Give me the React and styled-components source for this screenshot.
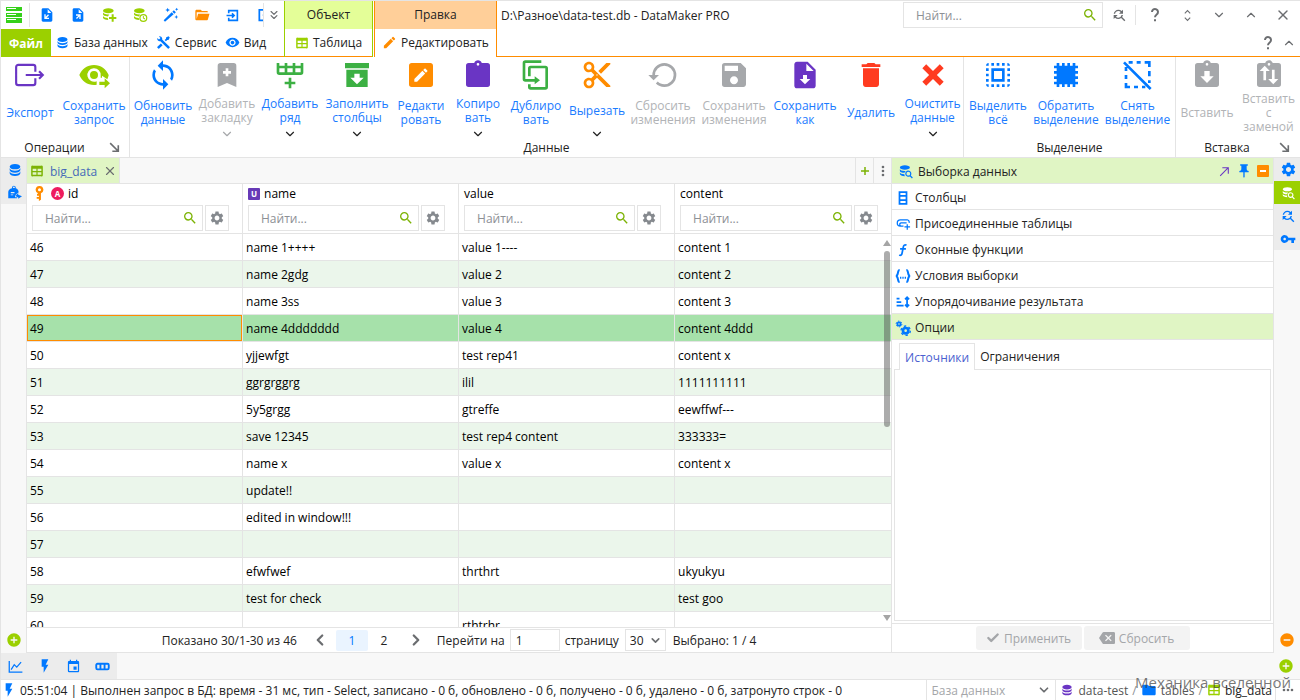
import { useState } from "react";
import styled, { createGlobalStyle } from "styled-components";
import {
  MdAddCircle,
  MdBackspace,
  MdContentCut,
  MdDelete,
  MdEdit,
  MdEvent,
  MdFindReplace,
  MdFlashOn,
  MdFolder,
  MdPushPin,
  MdRemoveCircle,
  MdSave,
  MdSearch,
  MdSelectAll,
  MdSettings,
  MdSync,
  MdVisibility,
  MdVpnKey,
} from "react-icons/md";
import { Check, ChevronDown, ChevronLeft, ChevronRight, ChevronUp, ChevronsDown, X } from "lucide-react";

const blue = "#0078ff";
const lime = "#9bd000";
const leaf = "#7cb305";
const green = "#3cb043";
const orange = "#ff8c00";
const purple = "#6a35c4";
const gray = "#a6a8ab";
const dark = "#6b6d70";
const line = "#e4e4e4";

const shapes = {
  database:
    "M12,3C7.58,3 4,4.79 4,7C4,9.21 7.58,11 12,11C16.42,11 20,9.21 20,7C20,4.79 16.42,3 12,3M4,9V12C4,14.21 7.58,16 12,16C16.42,16 20,14.21 20,12V9C20,11.21 16.42,13 12,13C7.58,13 4,11.21 4,9M4,14V17C4,19.21 7.58,21 12,21C16.42,21 20,19.21 20,17V14C20,16.21 16.42,18 12,18C7.58,18 4,16.21 4,14Z",
  databaseCut:
    "M11,2C6.6,2 3,3.6 3,5.6C3,7.6 6.6,9.2 11,9.2C15.4,9.2 19,7.6 19,5.6C19,3.6 15.4,2 11,2M3,8V11C3,12.7 6,14 10.4,14.1A7,7 0 0 1 12.6,11.1C7.600,11.500 3,10.200 3,8M3,13.200V16C3,17.800 6.200,19.200 11,19.400A7,7 0 0 1 10.200,16.400C6,16.300 3,15 3,13.200Z",
  plus: "M16,11H19V15H23V18H19V22H16V18H12V15H16Z",
  clock: "M17,10.500A6,6 0 1 0 17,22.500A6,6 0 1 0 17,10.500M17,12.300A4.200,4.200 0 1 1 17,20.700A4.200,4.200 0 1 1 17,12.300M16.300,13.500H17.700V16.200L19.700,17.400L19,18.600L16.300,17Z",
  lens: "M16.500,10.500A5,5 0 1 0 19.100,19.800L22.300,23L23.700,21.600L20.500,18.400A5,5 0 0 0 16.500,10.500M16.500,12.500A3,3 0 1 1 16.500,18.500A3,3 0 1 1 16.500,12.500Z",
  wand: "M3,22L1,20L13,8L16,11ZM14,7L16.300,4.700L19.300,7.700L17,10ZM7,1L8,3.500L10.500,4.500L8,5.500L7,8L6,5.500L3.500,4.500L6,3.500ZM20.500,1L21.300,2.700L23,3.500L21.300,4.300L20.500,6L19.700,4.300L18,3.500L19.700,2.700ZM20,12L20.900,14.100L23,15L20.900,15.900L20,18L19.100,15.900L17,15L19.100,14.100Z",
  folderOpen:
    "M19,20H4C2.89,20 2,19.1 2,18V6C2,4.89 2.89,4 4,4H10L12,6H19A2,2 0 0,1 21,8H21L4,8V18L6.14,10H23.21L20.93,18.5C20.7,19.37 19.92,20 19,20Z",
  tools:
    "M21.71 20.29L20.29 21.71A1 1 0 0 1 18.88 21.71L7 9.85A3.81 3.81 0 0 1 6 10A4 4 0 0 1 2.22 4.7L4.76 7.24L5.29 6.71L6.71 5.29L7.24 4.76L4.7 2.22A4 4 0 0 1 10 6A3.81 3.81 0 0 1 9.85 7L21.71 18.88A1 1 0 0 1 21.71 20.29M2.29 18.88A1 1 0 0 0 2.29 20.29L3.71 21.71A1 1 0 0 0 5.12 21.71L10.59 16.25L7.76 13.42M20 2L16 4V6L13.83 8.17L15.83 10.17L18 8H20L22 4Z",
  table:
    "M5,3H19A2,2 0 0,1 22,5V19A2,2 0 0,1 19,21H5A2,2 0 0,1 2,19V5A2,2 0 0,1 5,3M4.500,8V12H11V8H4.500M13,8V12H19.500V8H13M4.500,14V18.500H11V14H4.500M13,14V18.500H19.500V14H13Z",
  fileIn:
    "M14,2H6C4.89,2 4,2.89 4,4V20C4,21.11 4.89,22 6,22H18C19.11,22 20,21.11 20,20V8L14,2M13,9V3.5L18.5,9H13M8,18V11H10V14.600L13.600,11L15,12.400L11.400,16H15V18Z",
  fileOut:
    "M14,2H6C4.89,2 4,2.89 4,4V20C4,21.11 4.89,22 6,22H18C19.11,22 20,21.11 20,20V8L14,2M13,9V3.5L18.5,9H13M16,11V18H14V14.400L10.400,18L9,16.600L12.600,13H9V11Z",
  fileDown:
    "M14,2H6C4.89,2 4,2.89 4,4V20C4,21.11 4.89,22 6,22H18C19.11,22 20,21.11 20,20V8L14,2M12,19L8,15H10.5V12H13.5V15H16L12,19M13,9V3.5L18.5,9H13Z",
  bookmarkPlus:
    "M17,3A2,2 0 0,1 19,5V21L12,18L5,21V5C5,3.89 5.9,3 7,3H17M11,7V9H9V11H11V13H13V11H15V9H13V7H11Z",
  rowPlus:
    "M22,10A2,2 0 0,1 20,12H4A2,2 0 0,1 2,10V3H4V5H8V3H10V5H14V3H16V5H20V3H22V10M4,10H8V7H4V10M10,10H14V7H10V10M20,10V7H16V10H20M11,14H13V17H16V19H13V22H11V19H8V17H11V14Z",
  archiveDown: "M3,3H21V7H3V3M4,8H20V21H4V8M14,14V11H10V14H7L12,19L17,14H14Z",
  pencilBox:
    "M19,3H5C3.89,3 3,3.89 3,5V19A2,2 0 0,0 5,21H19A2,2 0 0,0 21,19V5C21,3.89 20.1,3 19,3M16.7,9.35L15.7,10.35L13.65,8.3L14.65,7.3C14.86,7.08 15.21,7.08 15.42,7.3L16.7,8.58C16.92,8.79 16.92,9.14 16.7,9.35M7,14.94L13.06,8.88L15.12,10.94L9.06,17H7V14.94Z",
  clipboard:
    "M19,3H14.82C14.4,1.84 13.3,1 12,1C10.7,1 9.6,1.84 9.18,3H5A2,2 0 0,0 3,5V19A2,2 0 0,0 5,21H19A2,2 0 0,0 21,19V5A2,2 0 0,0 19,3M12,3A1,1 0 0,1 13,4A1,1 0 0,1 12,5A1,1 0 0,1 11,4A1,1 0 0,1 12,3",
  clipboardDown:
    "M19,3H14.82C14.4,1.84 13.3,1 12,1C10.7,1 9.6,1.84 9.18,3H5A2,2 0 0,0 3,5V19A2,2 0 0,0 5,21H19A2,2 0 0,0 21,19V5A2,2 0 0,0 19,3M12,3A1,1 0 0,1 13,4A1,1 0 0,1 12,5A1,1 0 0,1 11,4A1,1 0 0,1 12,3M12,18L7,13H10V9H14V13H17L12,18Z",
  clipboardSwap:
    "M19,3H14.82C14.4,1.84 13.3,1 12,1C10.7,1 9.6,1.84 9.18,3H5A2,2 0 0,0 3,5V19A2,2 0 0,0 5,21H19A2,2 0 0,0 21,19V5A2,2 0 0,0 19,3M12,3A1,1 0 0,1 13,4A1,1 0 0,1 12,5A1,1 0 0,1 11,4A1,1 0 0,1 12,3M8.800,5L12.600,9H9.800V16H7.800V9H5ZM15.200,19L11.400,15H14.200V8H16.200V15H19Z",
  duplicate:
    "M11,17H4A2,2 0 0,1 2,15V3A2,2 0 0,1 4,1H16V3H4V15H11V13L15,16L11,19V17M19,21V7H8V13H6V7A2,2 0 0,1 8,5H19A2,2 0 0,1 21,7V21A2,2 0 0,1 19,23H8A2,2 0 0,1 6,21V19H8V21H19Z",
  restore:
    "M13,3A9,9 0 0,0 4,12H1L4.89,15.89L4.96,16.03L9,12H6A7,7 0 0,1 13,5A7,7 0 0,1 20,12A7,7 0 0,1 13,19C11.07,19 9.32,18.21 8.06,16.94L6.64,18.36C8.27,20 10.5,21 13,21A9,9 0 0,0 22,12A9,9 0 0,0 13,3Z",
  closeThick:
    "M20 6.91L17.09 4L12 9.09L6.91 4L4 6.91L9.09 12L4 17.09L6.91 20L12 14.91L17.09 20L20 17.09L14.91 12L20 6.91Z",
  invert:
    "M5,3H7V5H9V3H11V5H13V3H15V5H17V3H19V5H21V7H19V9H21V11H19V13H21V15H19V17H21V19H19V21H17V19H15V21H13V19H11V21H9V19H7V21H5V19H3V17H5V15H3V13H5V11H3V9H5V7H3V5H5V3Z",
  eyeArrow:
    "M12,4.500C7,4.500 2.730,7.610 1,12C2.730,16.390 7,19.500 12,19.500C12.700,19.500 13.400,19.400 14,19.300V16.600A5,5 0 1 1 17,12.500V14H18V12.500L22,15.200C22.500,13.800 23,12.800 23,12C21.270,7.610 17,4.500 12,4.500M12,9A3,3 0 1 0 12,15A3,3 0 1 0 12,9M16,17H20V14.500L24,18.200L20,22V19.500H16Z",
  dotsVertical:
    "M12,16A2,2 0 1 1 12,20A2,2 0 1 1 12,16M12,10A2,2 0 1 1 12,14A2,2 0 1 1 12,10M12,4A2,2 0 1 1 12,8A2,2 0 1 1 12,4Z",
  dots: "M16,12A2,2 0 1 1 20,12A2,2 0 1 1 16,12M10,12A2,2 0 1 1 14,12A2,2 0 1 1 10,12M4,12A2,2 0 1 1 8,12A2,2 0 1 1 4,12Z",
  bag: "M8,5V4A3,3 0 0 1 14,4V5C17,6 18.500,8 18.500,11V12L14,15L16,21H2V11C2,8 4,6 8,5M9.500,4.600H12.500V4A1.500,1.500 0 0 0 9.500,4ZM6,11V13H12V11ZM6,15V16.500H10V15ZM13,17L18,13V15.500L24,18L18,22V19.500H13Z",
  key: "M12,0A6,6 0 0 1 14.300,11.600V22L11,24L11,20.500H7.500V17.500H11V15.500H8V12.500H9.700V11.600A6,6 0 0 1 12,0M12,3.600A2.400,2.400 0 1 0 12,8.400A2.400,2.400 0 1 0 12,3.600Z",
};

const strokes = {
  export: "M20,9V4.500A2,2 0 0 0 18,2.500H4A2,2 0 0 0 2,4.500V19.500A2,2 0 0 0 4,21.500H18A2,2 0 0 0 20,19.500V15M11,12H27M23.500,8.500L27,12L23.500,15.500",
  enter: "M5,8V3H21V21H5V16M1,12H15M11,8L15,12L11,16",
  leave: "M17,3H4V21H17M10,12H22",
  unselect: "M8,2.500H5M11,2.500H14M17,2.500H20.500V6M20.500,9V13M20.500,16V18M3,6V9M3,12V15M3,18V21H6M9,21H12M15,21H17.500M1.500,2.500L21.500,22.500",
  help: "M7.500,7.500A4.500,4.500 0 1 1 14.500,11.200C12.800,12.500 12,13.200 12,15.500M12,18.500V21.500",
  unfold: "M7,8L12,3L17,8M7,16L12,21L17,16",
  corner: "M4,4L19,19M19,8V19H8",
  northEast: "M4,20L19,5M8,5H19V16",
  columns: "M6,2H18V22H6ZM6,8.500H18M6,15.500H18",
  link: "M8,16H7A5,5 0 0 1 7,6H18A4,4 0 0 1 21,11M12,16H9A2.500,2.500 0 0 1 8,11H17M18,13V22M13.500,17.500H22.500",
  func: "M18,4C15,2 13,4 12.500,7L10.500,17C10,20.500 8,22 5.500,20.500M7,10H17",
  braces: "M7,3C3,3 6,11 1.500,12C6,13 3,21 7,21M17,3C21,3 18,11 22.500,12C18,13 21,21 17,21M7.500,14.500H9.500M11,14.500H13M14.500,14.500H16.500",
  sort: "M1,6H6M1,12H9M1,18H13M19,4V20M15.500,7.500L19,4L22.500,7.500M15.500,16.500L19,20L22.500,16.500",
  chart: "M2,3V21H23M5,17L10,9L14,13L21,5",
  cells: "M4,7.500H20A2,2 0 0 1 22,9.500V14.500A2,2 0 0 1 20,16.500H4A2,2 0 0 1 2,14.500V9.500A2,2 0 0 1 4,7.500M8.700,8V16M15.300,8V16",
  add: "M12,4V20M4,12H20",
};

const Icon = ({ name, size = 16, color = blue }) => (
  <svg width={size} height={size} viewBox="0 0 24 24" fill={color} aria-hidden="true">
    {name.split(" ").map((part) => (
      <path key={part} fillRule="evenodd" d={shapes[part]} />
    ))}
  </svg>
);

const StrokeIcon = ({ name, size = 16, color = blue, weight = 2, wide }) => (
  <svg
    width={wide || size}
    height={size}
    viewBox={wide ? "0 0 30 24" : "0 0 24 24"}
    fill="none"
    stroke={color}
    strokeWidth={weight}
    aria-hidden="true"
  >
    <path d={strokes[name]} />
  </svg>
);

const Logo = () => (
  <svg width="16" height="16" viewBox="0 0 16 16" aria-hidden="true">
    {[0, 6, 11].map((y) => (
      <g key={y}>
        <rect y={y} width="16" height={y ? 5 : 4} fill="#35d01a" />
        <rect x="1" y={y + 1} width="9" height="1" fill="#fff" />
        <rect x="0" y={y - 1} width="16" height="1" fill="#fff" />
      </g>
    ))}
  </svg>
);

const quickActions = [
  { label: "Импорт файла", icon: <Icon name="fileIn" /> },
  { label: "Экспорт файла", icon: <Icon name="fileOut" /> },
  { label: "Новая база", icon: <Icon name="databaseCut plus" color={lime} /> },
  { label: "История базы", icon: <Icon name="databaseCut clock" color={lime} /> },
  { label: "Мастер", icon: <Icon name="wand" /> },
  { label: "Открыть", icon: <Icon name="folderOpen" color={orange} /> },
  { label: "Войти", icon: <StrokeIcon name="enter" size={13} weight={3} /> },
  { label: "Выйти", icon: <StrokeIcon name="leave" size={14} weight={3} /> },
];

const ribbon = [
  {
    title: "Операции",
    launcher: true,
    items: [
      { text: ["Экспорт"], width: 58, icon: <StrokeIcon name="export" size={26} wide={32} color={purple} /> },
      { text: ["Сохранить", "запрос"], width: 70, icon: <Icon name="eyeArrow" size={32} color={lime} /> },
    ],
  },
  {
    title: "Данные",
    items: [
      { text: ["Обновить", "данные"], width: 66, icon: <MdSync size={32} color={blue} /> },
      { text: ["Добавить", "закладку"], width: 62, off: true, menu: true, icon: <Icon name="bookmarkPlus" size={32} color={gray} /> },
      { text: ["Добавить", "ряд"], width: 64, menu: true, icon: <Icon name="rowPlus" size={32} color={green} /> },
      { text: ["Заполнить", "столбцы"], width: 70, menu: true, icon: <Icon name="archiveDown" size={32} color={green} /> },
      { text: ["Редакти", "ровать"], width: 58, icon: <Icon name="pencilBox" size={32} color={orange} /> },
      { text: ["Копиро", "вать"], width: 56, menu: true, icon: <Icon name="clipboard" size={32} color={purple} /> },
      { text: ["Дублиро", "вать"], width: 60, icon: <Icon name="duplicate" size={32} color={green} /> },
      { text: ["Вырезать"], width: 62, menu: true, icon: <MdContentCut size={32} color={orange} /> },
      { text: ["Сбросить", "изменения"], width: 70, off: true, icon: <Icon name="restore" size={32} color={gray} /> },
      { text: ["Сохранить", "изменения"], width: 72, off: true, icon: <MdSave size={32} color={gray} /> },
      { text: ["Сохранить", "как"], width: 70, icon: <Icon name="fileDown" size={32} color={purple} /> },
      { text: ["Удалить"], width: 62, icon: <MdDelete size={32} color="#ff3b20" /> },
      { text: ["Очистить", "данные"], width: 61, menu: true, icon: <Icon name="closeThick" size={32} color="#ff3b20" /> },
    ],
  },
  {
    title: "Выделение",
    items: [
      { text: ["Выделить", "всё"], width: 68, icon: <MdSelectAll size={32} color={blue} /> },
      { text: ["Обратить", "выделение"], width: 68, icon: <Icon name="invert" size={32} /> },
      { text: ["Снять", "выделение"], width: 75, icon: <StrokeIcon name="unselect" size={32} /> },
    ],
  },
  {
    title: "Вставка",
    launcher: true,
    items: [
      { text: ["Вставить"], width: 62, off: true, icon: <Icon name="clipboardDown" size={32} color={gray} /> },
      { text: ["Вставить", "с", "заменой"], width: 61, off: true, icon: <Icon name="clipboardSwap" size={32} color={gray} /> },
    ],
  },
];

const columns = [
  { name: "id", isKey: true },
  { name: "name", isUnique: true },
  { name: "value" },
  { name: "content" },
];

const rows = [
  ["46", "name 1++++", "value 1----", "content 1"],
  ["47", "name 2gdg", "value 2", "content 2"],
  ["48", "name 3ss", "value 3", "content 3"],
  ["49", "name 4ddddddd", "value 4", "content 4ddd"],
  ["50", "yjjewfgt", "test rep41", "content x"],
  ["51", "ggrgrggrg", "ilil", "1111111111"],
  ["52", "5y5grgg", "gtreffe", "eewffwf---"],
  ["53", "save 12345", "test rep4 content", "333333="],
  ["54", "name x", "value x", "content x"],
  ["55", "update!!", "", ""],
  ["56", "edited in window!!!", "", ""],
  ["57", "", "", ""],
  ["58", "efwfwef", "thrthrt", "ukyukyu"],
  ["59", "test for check", "", "test goo"],
  ["60", "", "rthtrhr", ""],
];

const sections = [
  { text: "Столбцы", icon: <StrokeIcon name="columns" size={14} weight={3} /> },
  { text: "Присоединенные таблицы", icon: <StrokeIcon name="link" size={15} weight={2} /> },
  { text: "Оконные функции", icon: <StrokeIcon name="func" size={14} weight={3} /> },
  { text: "Условия выборки", icon: <StrokeIcon name="braces" size={16} weight={3} /> },
  { text: "Упорядочивание результата", icon: <StrokeIcon name="sort" size={14} weight={3} /> },
];

const TitleBar = () => (
  <Header>
    <HeaderLeft>
      <QuickBar>
        <LogoCell>
          <Logo />
        </LogoCell>
        <QuickList>
          {quickActions.map(({ label, icon }) => (
            <QuickButton key={label} aria-label={label}>
              {icon}
            </QuickButton>
          ))}
        </QuickList>
        <MoreButton aria-label="Ещё">
          <ChevronsDown size={14} color={dark} />
        </MoreButton>
      </QuickBar>
      <MenuBar>
        <FileButton>Файл</FileButton>
        <MenuItem href="#db">
          <Icon name="database" size={15} />
          База данных
        </MenuItem>
        <MenuItem href="#service">
          <Icon name="tools" size={15} />
          Сервис
        </MenuItem>
        <MenuItem href="#view">
          <MdVisibility size={15} color={blue} />
          Вид
        </MenuItem>
      </MenuBar>
    </HeaderLeft>
    <ContextGroup $width={89} $edge={lime} $fill="#e4fe98">
      <span>Объект</span>
      <ContextTab href="#table">
        <Icon name="table" size={14} color={lime} />
        Таблица
      </ContextTab>
    </ContextGroup>
    <ContextGroup $width={123} $edge={orange} $fill="#ffcf99" $open>
      <span>Правка</span>
      <ContextTab href="#edit">
        <MdEdit size={15} color={orange} />
        Редактировать
      </ContextTab>
    </ContextGroup>
    <HeaderRight>
      <WindowRow>
        <WindowTitle>D:\Разное\data-test.db - DataMaker PRO</WindowTitle>
        <GlobalSearch>
          <input placeholder="Найти..." aria-label="Найти" />
          <MdSearch size={16} color={leaf} />
        </GlobalSearch>
        <WindowButton aria-label="Найти и заменить">
          <MdFindReplace size={16} color={dark} />
        </WindowButton>
        <Divider />
        <WindowButton aria-label="Справка">
          <StrokeIcon name="help" color={dark} weight={3} />
        </WindowButton>
        <WindowButton aria-label="Развернуть">
          <StrokeIcon name="unfold" size={13} color={dark} weight={2} />
        </WindowButton>
        <WindowButton aria-label="Свернуть">
          <ChevronDown size={14} color={dark} />
        </WindowButton>
        <WindowButton aria-label="Восстановить">
          <ChevronUp size={14} color={dark} />
        </WindowButton>
        <WindowButton aria-label="Закрыть">
          <X size={16} color={dark} />
        </WindowButton>
      </WindowRow>
      <HelpRow>
        <IconButton aria-label="Помощь">
          <StrokeIcon name="help" color={dark} weight={3} />
        </IconButton>
        <IconButton aria-label="Скрыть ленту">
          <ChevronUp size={14} color={dark} />
        </IconButton>
      </HelpRow>
    </HeaderRight>
  </Header>
);

const Ribbon = () => (
  <RibbonBar>
    {ribbon.map((group) => (
      <RibbonGroup key={group.title}>
        <RibbonItems>
          {group.items.map(({ text, width, off, menu, icon }) => (
            <RibbonButton key={text.join()} $width={width} $menu={menu} disabled={off}>
              <RibbonIcon>{icon}</RibbonIcon>
              <RibbonLabel>
                {text.map((part) => (
                  <span key={part}>{part}</span>
                ))}
              </RibbonLabel>
              {menu && (
                <MenuMark>
                  <ChevronDown size={14} color={off ? gray : "#222"} />
                </MenuMark>
              )}
            </RibbonButton>
          ))}
        </RibbonItems>
        <RibbonTitle $launcher={group.launcher}>
          <span>{group.title}</span>
          {group.launcher && (
            <IconButton aria-label={`Параметры: ${group.title}`}>
              <StrokeIcon name="corner" size={13} color={dark} weight={3} />
            </IconButton>
          )}
        </RibbonTitle>
      </RibbonGroup>
    ))}
  </RibbonBar>
);

const DataTable = () => {
  const [selected, setSelected] = useState("49");

  return (
    <TableArea>
      <Table>
        <thead>
          <tr>
            {columns.map(({ name, isKey, isUnique }) => (
              <HeadCell key={name}>
                <ColumnName>
                  {isKey && <Icon name="key" size={15} color={orange} />}
                  {isKey && <Badge $round>A</Badge>}
                  {isUnique && <Badge>U</Badge>}
                  {name}
                </ColumnName>
                <FilterRow>
                  <FilterBox>
                    <input placeholder="Найти..." aria-label={`Фильтр ${name}`} />
                    <MdSearch size={16} color={leaf} />
                  </FilterBox>
                  <FilterButton aria-label={`Настройки ${name}`}>
                    <MdSettings size={16} color="#85898e" />
                  </FilterButton>
                </FilterRow>
              </HeadCell>
            ))}
          </tr>
        </thead>
        <tbody>
          {rows.map((row) => (
            <Row key={row[0]} $selected={row[0] === selected} onClick={() => setSelected(row[0])}>
              {row.map((cell, i) => (
                <td key={columns[i].name}>{cell}</td>
              ))}
            </Row>
          ))}
        </tbody>
      </Table>
      <Scrollbar>
        <ScrollArrow />
        <ScrollTrack>
          <ScrollThumb />
        </ScrollTrack>
        <ScrollArrow $down />
      </Scrollbar>
    </TableArea>
  );
};

const Pager = () => (
  <PagerBar>
    <span>Показано 30/1-30 из 46</span>
    <PageButton aria-label="Назад">
      <ChevronLeft size={18} color={dark} strokeWidth={3} />
    </PageButton>
    <PageButton $active>1</PageButton>
    <PageButton>2</PageButton>
    <PageButton aria-label="Вперёд">
      <ChevronRight size={18} color={dark} strokeWidth={3} />
    </PageButton>
    <PagerField>
      Перейти на
      <input defaultValue="1" />
      страницу
    </PagerField>
    <PageSize>
      <select defaultValue="30" aria-label="Строк на странице">
        <option>30</option>
        <option>50</option>
      </select>
      <ChevronDown size={13} color={dark} strokeWidth={3} />
    </PageSize>
    <span>Выбрано: 1 / 4</span>
  </PagerBar>
);

const QueryPanel = () => (
  <Panel>
    <PanelHeader>
      <Icon name="databaseCut lens" size={15} />
      <PanelTitle>Выборка данных</PanelTitle>
      <IconButton aria-label="Открепить">
        <StrokeIcon name="northEast" size={13} color={purple} weight={2} />
      </IconButton>
      <IconButton aria-label="Закрепить">
        <MdPushPin size={16} color={blue} />
      </IconButton>
      <MinusButton aria-label="Свернуть">
        <span />
      </MinusButton>
    </PanelHeader>
    {sections.map(({ text, icon }) => (
      <SectionButton key={text}>
        <SectionIcon>{icon}</SectionIcon>
        {text}
      </SectionButton>
    ))}
    <SectionButton $active>
      <SectionIcon>
        <svg width="16" height="16" viewBox="0 0 24 24" fill="none" stroke={blue} aria-hidden="true">
          <circle cx="6" cy="6" r="2.500" strokeWidth="2.500" />
          <circle cx="6" cy="6" r="4.300" strokeWidth="1.500" strokeDasharray="2.250 2.250" />
          <circle cx="16" cy="16" r="4" strokeWidth="4" />
          <circle cx="16" cy="16" r="7" strokeWidth="2" strokeDasharray="3.660 3.660" />
        </svg>
      </SectionIcon>
      Опции
    </SectionButton>
    <Tabs role="tablist">
      <Tab role="tab" aria-selected="true" $active>
        Источники
      </Tab>
      <Tab role="tab" aria-selected="false">
        Ограничения
      </Tab>
    </Tabs>
    <TabBody />
    <PanelFooter>
      <FooterButton disabled>
        <Check size={14} strokeWidth={4} />
        Применить
      </FooterButton>
      <FooterButton disabled>
        <MdBackspace size={16} />
        Сбросить
      </FooterButton>
    </PanelFooter>
  </Panel>
);

const App = () => {
  return (
    <Window>
      <GlobalStyle />
      <TitleBar />
      <Ribbon />
      <Workspace>
        <Rail>
          <RailButton aria-label="Базы">
            <Icon name="database" size={16} />
          </RailButton>
          <RailButton aria-label="Избранное">
            <Icon name="bag" size={15} />
          </RailButton>
          <RailFoot>
            <IconButton aria-label="Добавить панель слева">
              <MdAddCircle size={16} color={lime} />
            </IconButton>
          </RailFoot>
        </Rail>
        <Center>
          <DocTabs>
            <DocTab>
              <Icon name="table" size={14} color={leaf} />
              <span>big_data</span>
              <IconButton aria-label="Закрыть вкладку">
                <X size={14} color={dark} />
              </IconButton>
            </DocTab>
            <DocAction aria-label="Новая вкладка">
              <StrokeIcon name="add" size={12} color={leaf} weight={3} />
            </DocAction>
            <DocAction aria-label="Меню вкладок">
              <Icon name="dotsVertical" size={16} color={dark} />
            </DocAction>
          </DocTabs>
          <DataTable />
          <Pager />
        </Center>
        <QueryPanel />
        <Rail $right>
          <RailButton aria-label="Настройки">
            <MdSettings size={17} color={blue} />
          </RailButton>
          <RailButton aria-label="Выборка данных" $active>
            <Icon name="databaseCut lens" size={14} color="#fff" />
          </RailButton>
          <RailButton aria-label="Поиск и замена">
            <MdFindReplace size={16} color={blue} />
          </RailButton>
          <RailButton aria-label="Ключи">
            <MdVpnKey size={16} color={blue} />
          </RailButton>
          <RailFoot>
            <IconButton aria-label="Убрать панель">
              <MdRemoveCircle size={16} color={orange} />
            </IconButton>
          </RailFoot>
        </Rail>
      </Workspace>
      <BottomStrip>
        <BottomTools>
          <IconButton aria-label="График">
            <StrokeIcon name="chart" size={15} />
          </IconButton>
          <IconButton aria-label="События">
            <MdFlashOn size={16} color={blue} />
          </IconButton>
          <IconButton aria-label="Календарь">
            <MdEvent size={15} color={blue} />
          </IconButton>
          <IconButton aria-label="Ячейки">
            <StrokeIcon name="cells" size={15} weight={3} />
          </IconButton>
        </BottomTools>
        <IconButton aria-label="Добавить панель снизу">
          <MdAddCircle size={16} color={lime} />
        </IconButton>
      </BottomStrip>
      <StatusBar>
        <MdFlashOn size={16} color={blue} />
        <StatusText>
          05:51:04 | Выполнен запрос в БД: время - 31 мс, тип - Select, записано - 0 б, обновлено - 0 б,
          получено - 0 б, удалено - 0 б, затронуто строк - 0
        </StatusText>
        <DbSelect>
          <select defaultValue="" aria-label="База данных">
            <option value="">База данных</option>
          </select>
          <ChevronDown size={14} color={dark} strokeWidth={3} />
        </DbSelect>
        <Crumbs>
          <Icon name="database" size={14} color={purple} />
          <a href="#data-test">data-test</a>
          <i>/</i>
          <MdFolder size={16} color={blue} />
          <a href="#tables">tables</a>
          <i>/</i>
          <Icon name="table" size={14} color={lime} />
          <a href="#big_data">big_data</a>
        </Crumbs>
        <StatusMore aria-label="Дополнительно">
          <Icon name="dots" size={16} color={dark} />
        </StatusMore>
        <Watermark>Механика вселенной</Watermark>
      </StatusBar>
    </Window>
  );
};

export default App;

const GlobalStyle = createGlobalStyle`
  * {
    box-sizing: border-box;
  }

  body {
    margin: 0;
    background: #fff;
    color: #222;
    font-family: "Open Sans", "Noto Sans", sans-serif;
    font-size: 12px;
  }

  button, input, select {
    margin: 0;
    padding: 0;
    border: 0;
    background: none;
    color: inherit;
    font: inherit;
  }

  input {
    min-width: 0;
    outline: 0;
  }

  input::placeholder {
    color: #8d9095;
    opacity: 1;
  }

  a {
    color: inherit;
    text-decoration: none;
  }

  svg {
    display: block;
    flex: none;
  }
`;

const Window = styled.div`
  display: flex;
  flex-direction: column;
  height: 100vh;
  overflow: hidden;
  border-top: 1px solid ${line};
  border-left: 1px solid ${line};
  white-space: nowrap;
`;

const IconButton = styled.button`
  display: flex;
  align-items: center;
  justify-content: center;
`;

const Header = styled.header`
  display: flex;
  flex: none;
  height: 56px;
`;

const HeaderLeft = styled.div`
  display: flex;
  flex-direction: column;
  width: 283px;
`;

const QuickBar = styled.div`
  display: flex;
  align-items: center;
  height: 28px;
`;

const LogoCell = styled.div`
  display: flex;
  justify-content: center;
  width: 29px;
  padding: 4px 2px 4px 0;
  border-right: 1px solid ${line};
`;

const QuickList = styled.div`
  display: flex;
  flex: 1;
  padding-left: 1px;
  overflow: hidden;
  border-right: 1px solid ${line};
`;

const QuickButton = styled(IconButton)`
  flex: none;
  width: 31px;
  height: 24px;
`;

const MoreButton = styled(IconButton)`
  width: 20px;
`;

const MenuBar = styled.nav`
  display: flex;
  flex: 1;
  gap: 8px;
  padding-left: 50px;
  border-bottom: 1px solid ${orange};
`;

const MenuItem = styled.a`
  display: flex;
  align-items: center;
  gap: 4px;

  &:first-of-type {
    margin-left: -4px;
  }
`;

const FileButton = styled.button`
  width: 50px;
  margin: 0 0 -1px -50px;
  background: ${lime};
  color: #fff;
  font-weight: bold;
`;

const ContextGroup = styled.div`
  display: flex;
  flex-direction: column;
  width: ${({ $width }) => $width}px;
  margin-right: ${({ $open }) => ($open ? 0 : 1)}px;
  border: 0 solid ${({ $edge }) => $edge};
  border-width: 0 1px;

  > span {
    height: 28px;
    background: ${({ $fill }) => $fill};
    line-height: 28px;
    text-align: center;
  }

  > a {
    border-bottom: 1px solid ${({ $open }) => ($open ? "transparent" : orange)};
  }
`;

const ContextTab = styled.a`
  display: flex;
  flex: 1;
  align-items: center;
  justify-content: center;
  gap: 4px;
`;

const HeaderRight = styled.div`
  display: flex;
  flex: 1;
  flex-direction: column;
  border-bottom: 1px solid ${orange};
`;

const WindowRow = styled.div`
  display: flex;
  align-items: center;
  height: 28px;
  padding-right: 1px;
`;

const WindowTitle = styled.div`
  flex: 1;
  padding-left: 4px;
`;

const GlobalSearch = styled.label`
  display: flex;
  align-items: center;
  width: 200px;
  height: 26px;
  padding: 0 4px 0 12px;
  border: 1px solid ${line};

  input {
    flex: 1;
  }
`;

const WindowButton = styled(IconButton)`
  width: 32px;
  height: 28px;
`;

const Divider = styled.div`
  width: 1px;
  height: 20px;
  margin-right: 3px;
  background: ${line};
`;

const HelpRow = styled.div`
  display: flex;
  flex: 1;
  align-items: center;
  justify-content: flex-end;
  gap: 6px;
  padding-right: 4px;
`;

const RibbonBar = styled.div`
  display: flex;
  flex: none;
  height: 101px;
  overflow: hidden;
  border-bottom: 1px solid ${line};
`;

const RibbonGroup = styled.section`
  display: flex;
  flex: none;
  flex-direction: column;

  & + & {
    border-left: 1px solid ${line};
  }
`;

const RibbonItems = styled.div`
  display: flex;
  flex: 1;
`;

const RibbonButton = styled.button`
  display: flex;
  flex-direction: column;
  align-items: center;
  width: ${({ $width }) => $width}px;
  padding: 2px 0 ${({ $menu }) => ($menu ? 0 : 4)}px;
  color: ${({ disabled }) => (disabled ? "#b1b3b6" : "#1a7bff")};
  line-height: 14px;
`;

const RibbonIcon = styled.span`
  display: flex;
  align-items: center;
  height: 32px;
`;

const RibbonLabel = styled.span`
  display: flex;
  flex: 1;
  flex-direction: column;
  justify-content: center;
`;

const MenuMark = styled.span`
  display: flex;
  align-items: center;
  height: 8px;
`;

const RibbonTitle = styled.div`
  display: flex;
  align-items: center;
  height: 19px;
  padding: 0 ${({ $launcher }) => ($launcher ? "8px 0 0" : "0")};

  span {
    flex: 1;
    text-align: center;
  }
`;

const Workspace = styled.div`
  display: flex;
  flex: 1;
  min-height: 0;
`;

const Rail = styled.aside`
  display: flex;
  flex: none;
  flex-direction: column;
  width: ${({ $right }) => ($right ? 27 : 26)}px;
  border-${({ $right }) => ($right ? "left" : "right")}: 1px solid ${line};
  background: #f8f8f8;
`;

const RailButton = styled(IconButton)`
  height: 23px;
  padding-left: 2px;
  background: ${({ $active }) => ($active ? lime : "#ececec")};
`;

const RailFoot = styled.div`
  display: flex;
  justify-content: center;
  margin-top: auto;
  padding-bottom: 5px;
`;

const Center = styled.main`
  display: flex;
  flex: 1;
  flex-direction: column;
  min-width: 0;
`;

const DocTabs = styled.div`
  display: flex;
  height: 26px;
  border-bottom: 1px solid ${line};
  background: #f8f8f8;
`;

const DocTab = styled.div`
  display: flex;
  align-items: center;
  gap: 6px;
  margin-right: auto;
  padding: 0 2px 0 3px;
  border-right: 1px solid ${line};
  background: #e0f5c4;
  color: #4569b8;

  span {
    height: 14px;
    overflow: hidden;
    line-height: 16px;
  }
`;

const DocAction = styled(IconButton)`
  width: 18px;
  border-left: 1px solid ${line};
`;

const TableArea = styled.div`
  position: relative;
  flex: 1;
  min-height: 0;
  overflow: hidden;
`;

const Table = styled.table`
  width: 100%;
  table-layout: fixed;
  border-collapse: separate;
  border-spacing: 0;
  color: #000;

  th, td {
    border-bottom: 1px solid ${line};
    border-right: 1px solid ${line};
    text-align: left;
  }

  th:last-child, td:last-child {
    border-right: 0;
  }

  td {
    height: 27px;
    padding: 0 0 0 3px;
  }
`;

const HeadCell = styled.th`
  height: 50px;
  padding: 0 13px 2px 5px;
  font-weight: normal;

  &:first-child {
    width: calc(25% + 1px);
  }
`;

const ColumnName = styled.div`
  display: flex;
  align-items: center;
  gap: 4px;
  height: 19px;
`;

const Badge = styled.span`
  width: ${({ $round }) => ($round ? 13 : 12)}px;
  height: ${({ $round }) => ($round ? 13 : 12)}px;
  border-radius: ${({ $round }) => ($round ? "50%" : "1px")};
  background: ${({ $round }) => ($round ? "#ee1c5e" : "#673ab7")};
  color: #fff;
  font-size: 8px;
  font-weight: bold;
  line-height: ${({ $round }) => ($round ? 13 : 12)}px;
  text-align: center;
`;

const FilterRow = styled.div`
  display: flex;
  gap: 2px;
  height: 26px;
  margin-top: 2px;
`;

const FilterBox = styled.label`
  display: flex;
  flex: 1;
  align-items: center;
  min-width: 0;
  padding: 0 4px 0 12px;
  border: 1px solid ${line};

  input {
    flex: 1;
  }
`;

const FilterButton = styled(IconButton)`
  width: 24px;
  border: 1px solid ${line};
`;

const Row = styled.tr`
  background: ${({ $selected }) => ($selected ? "#a6e1aa" : "#fff")};

  &:nth-child(even) {
    background: ${({ $selected }) => ($selected ? "#a6e1aa" : "#ebf6eb")};
  }

  td:first-child {
    box-shadow: ${({ $selected }) => ($selected ? `inset 0 0 0 1px ${orange}` : "none")};
  }
`;

const Scrollbar = styled.div`
  position: absolute;
  top: 56px;
  right: 0;
  bottom: 6px;
  display: flex;
  flex-direction: column;
  align-items: center;
  gap: 5px;
  width: 9px;
`;

const ScrollArrow = styled.span`
  border: 4px solid transparent;
  border-width: ${({ $down }) => ($down ? "6px 4px 0" : "0 4px 6px")};
  border-color: ${({ $down }) => ($down ? "#a5a5a5 transparent transparent" : "transparent transparent #a5a5a5")};
`;

const ScrollTrack = styled.div`
  flex: 1;
  width: 6px;
`;

const ScrollThumb = styled.div`
  height: 49%;
  border-radius: 3px;
  background: rgba(90, 90, 90, 0.5);
`;

const PagerBar = styled.footer`
  display: flex;
  align-items: center;
  justify-content: center;
  height: 26px;
  border: 0 solid ${line};
  border-width: 1px 0;

  > span {
    padding: 0 7px;
  }
`;

const PageButton = styled(IconButton)`
  width: 32px;
  height: 21px;
  border-radius: 2px;
  background: ${({ $active }) => ($active ? "#eaf4ff" : "none")};
  color: ${({ $active }) => ($active ? blue : "inherit")};
`;

const PagerField = styled.label`
  display: flex;
  align-items: center;
  gap: 5px;
  padding-left: 5px;

  input {
    width: 50px;
    height: 22px;
    padding-left: 5px;
    border: 1px solid ${line};
  }
`;

const PageSize = styled.div`
  display: flex;
  align-items: center;
  height: 22px;
  margin-left: 6px;
  padding: 0 3px 0 4px;
  border: 1px solid ${line};

  select {
    width: 32px;
    margin-right: -13px;
    appearance: none;
  }

  svg {
    pointer-events: none;
  }
`;

const Panel = styled.section`
  display: flex;
  flex: 0 0 29.400%;
  flex-direction: column;
  border-left: 1px solid ${line};
  border-bottom: 1px solid ${line};
`;

const PanelHeader = styled.div`
  display: flex;
  align-items: center;
  gap: 5px;
  height: 26px;
  padding: 1px 4px 0 6px;
  border-bottom: 1px solid ${line};
  background: #e0f5c4;
`;

const PanelTitle = styled.h2`
  flex: 1;
  margin: 0;
  font-size: 12px;
  font-weight: normal;
`;

const MinusButton = styled(IconButton)`
  width: 12px;
  height: 12px;
  border-radius: 1px;
  background: ${orange};

  span {
    width: 6px;
    height: 2px;
    background: #fff;
  }
`;

const SectionButton = styled.button`
  display: flex;
  align-items: center;
  gap: 4px;
  height: 26px;
  padding: 2px 0 0 3px;
  border-bottom: 1px solid ${line};
  background: ${({ $active }) => ($active ? "#e0f5c4" : "#fff")};
`;

const SectionIcon = styled.span`
  display: flex;
  justify-content: center;
  width: 16px;
`;

const Tabs = styled.div`
  display: flex;
  padding: 3px 7px 0;
`;

const Tab = styled.button`
  position: relative;
  height: 27px;
  margin-bottom: -1px;
  padding: 0 5px;
  border: ${({ $active }) => ($active ? `1px solid ${line}` : 0)};
  border-bottom: 0;
  background: ${({ $active }) => ($active ? "#fff" : "none")};
  color: ${({ $active }) => ($active ? "#4b5fd0" : "inherit")};
`;

const TabBody = styled.div`
  flex: 1;
  margin: 0 2px 2px;
  border: 1px solid ${line};
`;

const PanelFooter = styled.div`
  display: flex;
  align-items: center;
  justify-content: center;
  gap: 2px;
  height: 29px;
  border-top: 1px solid ${line};
`;

const FooterButton = styled.button`
  display: flex;
  align-items: center;
  justify-content: center;
  gap: 4px;
  width: 106px;
  height: 24px;
  border-radius: 3px;
  background: #f3f3f3;
  color: #a4a6a9;
`;

const BottomStrip = styled.div`
  display: flex;
  flex: none;
  align-items: center;
  justify-content: space-between;
  height: 27px;
  padding-right: 6px;
  border-bottom: 1px solid ${line};
  background: #f8f8f8;
`;

const BottomTools = styled.div`
  display: flex;
  height: 100%;
  background: #ececec;

  button {
    width: 29px;
  }
`;

const StatusBar = styled.footer`
  position: relative;
  display: flex;
  flex: none;
  align-items: center;
  height: 20px;
`;

const StatusText = styled.div`
  flex: 1;
  min-width: 0;
  padding-left: 3px;
  overflow: hidden;
`;

const DbSelect = styled.div`
  display: flex;
  align-items: center;
  width: 130px;
  height: 100%;
  padding: 0 4px;
  border: 0 solid ${line};
  border-width: 0 1px;
  color: #a4a6a9;

  select {
    flex: 1;
    appearance: none;
  }
`;

const Crumbs = styled.nav`
  display: flex;
  align-items: center;
  gap: 4px;
  height: 100%;
  padding: 0 3px 0 4px;
  border-right: 1px solid ${line};
  color: #555;

  i {
    color: #8d9095;
    font-style: normal;
  }

  a:last-child {
    color: #222;
  }
`;

const StatusMore = styled(IconButton)`
  width: 24px;
`;

const Watermark = styled.span`
  position: absolute;
  right: 9px;
  bottom: 8px;
  color: rgba(60, 60, 60, 0.7);
  font-size: 15px;
  line-height: 20px;
`;
